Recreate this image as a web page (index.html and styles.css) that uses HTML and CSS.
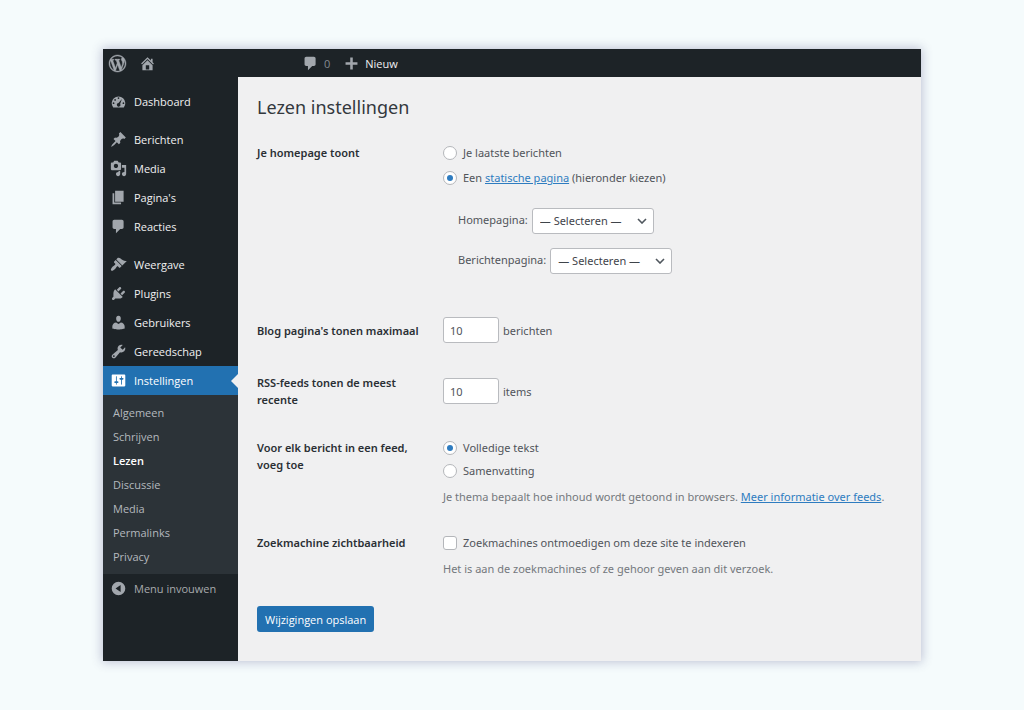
FILE: index.html
```html
<!DOCTYPE html>
<html lang="nl">
<head>
<meta charset="utf-8">
<meta name="viewport" content="width=device-width, initial-scale=1">
<title>Lezen instellingen</title>
<link rel="stylesheet" href="styles.css">
</head>
<body>
<div class="window">
  <header class="adminbar">
    <a class="bar-link" href="#" aria-label="WordPress"><svg class="icon logo" viewBox="0 0 20 20"><path d="M20 10c0-5.510-4.490-10-10-10C4.480 0 0 4.490 0 10c0 5.520 4.480 10 10 10 5.510 0 10-4.480 10-10zM7.780 15.370L4.370 6.220c.55-.02 1.170-.08 1.170-.08.5-.06.44-1.130-.06-1.110 0 0-1.450.11-2.370.11-.18 0-.37 0-.58-.01C4.120 2.690 6.870 1.110 10 1.110c2.330 0 4.450.87 6.050 2.340-.68-.11-1.650.39-1.650 1.580 0 .74.45 1.360.9 2.100.35.61.55 1.360.55 2.460 0 1.490-1.400 5-1.400 5l-3.030-8.370c.54-.02.82-.17.82-.17.5-.05.44-1.250-.06-1.220 0 0-1.440.12-2.380.12-.87 0-2.330-.12-2.330-.12-.5-.03-.56 1.200-.06 1.220l.92.08 1.260 3.410zM17.410 10c.24-.64.74-1.870.43-4.250.7 1.290 1.050 2.710 1.050 4.250 0 3.290-1.730 6.240-4.400 7.780.97-2.590 1.940-5.200 2.920-7.780zM6.100 18.090C3.120 16.650 1.110 13.530 1.110 10c0-1.300.23-2.480.72-3.590C3.250 10.300 4.670 14.200 6.100 18.090zm4.030-6.630l2.580 6.980c-.86.29-1.760.45-2.710.45-.79 0-1.570-.11-2.290-.33.81-2.380 1.620-4.740 2.420-7.100z"/></svg></a>
    <a class="bar-link site" href="#" aria-label="Site"><svg class="icon" viewBox="0 0 20 20"><path d="M16 8.500l1.530 1.530-1.060 1.060L10 4.600l-6.470 6.490-1.060-1.060L10 2.500l4 4v-2h2v4zm-6-2.460l6 5.990V18H4v-5.970zM12 17v-5H8v5h4z"/></svg></a>
    <a class="bar-link muted" href="#"><svg class="icon" viewBox="0 0 20 20"><path d="M5 2h9c1.100 0 2 .9 2 2v7c0 1.100-.9 2-2 2h-2l-5 5v-5H5c-1.100 0-2-.9-2-2V4c0-1.100.9-2 2-2z"/></svg>0</a>
    <a class="bar-link" href="#"><svg class="icon" viewBox="0 0 20 20"><path d="M17 8.500v3h-5.500V17h-3v-5.500H3v-3h5.500V3h3v5.500z"/></svg>Nieuw</a>
  </header>
  <div class="body">
    <nav class="menu">
      <ul class="menu-list">
        <li><a class="item" href="#"><svg class="icon" viewBox="0 0 20 20"><path fill-rule="evenodd" d="M3.760 17h12.480A8 8 0 1 0 3.760 17zM9 6a1 1 0 1 1 2 0 1 1 0 0 1-2 0zM5 8.200a1 1 0 1 1 2 0 1 1 0 0 1-2 0zM3.200 12a1 1 0 1 1 2 0 1 1 0 0 1-2 0zM14.800 12a1 1 0 1 1 2 0 1 1 0 0 1-2 0zM14 7.200l-2.100 5.600a2.100 2.100 0 1 1-1.900-.9z"/></svg>Dashboard</a></li>
      </ul>
      <ul class="menu-list">
        <li><a class="item" href="#"><svg class="icon" viewBox="0 0 20 20"><path d="M10.440 3.020l1.820-1.820 6.360 6.350-1.830 1.820c-1.050-.68-2.480-.57-3.410.36l-.75.75c-.92.93-1.040 2.350-.35 3.410l-1.830 1.820-2.410-2.410-2.800 2.790c-.42.42-3.380 2.710-3.800 2.290s1.860-3.390 2.280-3.810l2.790-2.790L4.100 9.360l1.830-1.820c1.050.69 2.480.57 3.400-.36l.75-.75c.93-.92 1.050-2.350.36-3.410z"/></svg>Berichten</a></li>
        <li><a class="item" href="#"><svg class="icon" viewBox="0 0 20 20"><path d="M13 11V4c0-.55-.45-1-1-1h-1.670L9 1H5L3.670 3H2c-.55 0-1 .45-1 1v7c0 .55.45 1 1 1h10c.55 0 1-.45 1-1zM7 4.500c1.380 0 2.500 1.120 2.500 2.500S8.380 9.500 7 9.500 4.500 8.380 4.500 7 5.620 4.500 7 4.500zM14 6h5v10.500c0 1.380-1.120 2.500-2.500 2.500S14 17.880 14 16.500s1.120-2.500 2.500-2.500c.17 0 .34.02.5.05V9h-3V6zm-4 8.050V13h2v3.500c0 1.380-1.120 2.500-2.500 2.500S7 17.880 7 16.500 8.120 14 9.500 14c.17 0 .34.02.5.05z"/></svg>Media</a></li>
        <li><a class="item" href="#"><svg class="icon" viewBox="0 0 20 20"><path d="M6 15V2h10v13H6zm-1 1h8v2H3V5h2v11z"/></svg>Pagina's</a></li>
        <li><a class="item" href="#"><svg class="icon" viewBox="0 0 20 20"><path d="M5 2h9c1.100 0 2 .9 2 2v7c0 1.100-.9 2-2 2h-2l-5 5v-5H5c-1.100 0-2-.9-2-2V4c0-1.100.9-2 2-2z"/></svg>Reacties</a></li>
      </ul>
      <ul class="menu-list">
        <li><a class="item" href="#"><svg class="icon" viewBox="0 0 20 20"><path d="M14.480 11.060L7.410 3.990l1.500-1.500c.5-.56 2.300-.47 3.510.32 1.210.8 1.430 1.280 2.910 2.100 1.180.64 2.450 1.260 4.450.85zm-.71.71L6.700 4.700 4.930 6.470c-.39.39-.39 1.020 0 1.410l1.060 1.060c.39.39.39 1.030 0 1.420-.6.6-1.430 1.110-2.210 1.690-.35.26-.7.53-1.010.84C1.430 14.230.4 16.080 1.400 17.070c.99 1 2.840-.03 4.180-1.360.31-.31.58-.66.85-1.020.57-.78 1.080-1.610 1.690-2.210.39-.39 1.020-.39 1.410 0l1.060 1.060c.39.39 1.020.39 1.410 0z"/></svg>Weergave</a></li>
        <li><a class="item" href="#"><svg class="icon" viewBox="0 0 20 20"><path d="M13.110 4.360L9.870 7.600 8 5.730l3.240-3.240c.35-.34 1.050-.2 1.560.32.52.51.66 1.210.31 1.550zm-8 1.770l.91-1.120 9.010 9.010-1.190.84c-.71.71-2.630 1.160-3.820 1.160H6.140L4.900 17.260c-.59.59-1.540.59-2.120 0-.59-.58-.59-1.530 0-2.120l1.240-1.240v-3.880c0-1.130.4-3.190 1.090-3.890zm7.260 3.970l3.240-3.240c.34-.35 1.040-.21 1.550.31.52.51.66 1.210.31 1.550l-3.240 3.250z"/></svg>Plugins</a></li>
        <li><a class="item" href="#"><svg class="icon" viewBox="0 0 20 20"><path d="M10 9.250c-2.270 0-2.730-3.440-2.730-3.440C7 4.020 7.820 2 9.970 2c2.160 0 2.980 2.020 2.710 3.810 0 0-.41 3.440-2.680 3.440zm0 2.570L12.720 10c2.390 0 4.520 2.330 4.520 4.530v2.490s-3.650 1.130-7.240 1.130c-3.650 0-7.240-1.130-7.240-1.130v-2.490c0-2.250 1.940-4.480 4.470-4.480z"/></svg>Gebruikers</a></li>
        <li><a class="item" href="#"><svg class="icon" viewBox="0 0 20 20"><path d="M16.680 9.770c-1.340 1.340-3.300 1.670-4.950.99l-5.410 6.520c-.99.99-2.590.99-3.580 0s-.99-2.590 0-3.570l6.520-5.420c-.68-1.650-.35-3.610.99-4.950 1.280-1.280 3.120-1.620 4.720-1.060l-2.890 2.890 2.820 2.820 2.860-2.870c.53 1.580.18 3.390-1.080 4.650zM3.810 16.210c.4.39 1.040.39 1.430 0 .4-.4.4-1.040 0-1.430-.39-.4-1.030-.4-1.430 0-.39.39-.39 1.030 0 1.430z"/></svg>Gereedschap</a></li>
        <li>
          <a class="item current" href="#"><svg class="icon" viewBox="0 0 20 20"><path d="M18 16V4c0-.55-.45-1-1-1H3c-.55 0-1 .45-1 1v12c0 .55.45 1 1 1h14c.55 0 1-.45 1-1zM8 11h1c.55 0 1 .45 1 1s-.45 1-1 1H8v1.500c0 .28-.22.5-.5.5s-.5-.22-.5-.5V13H6c-.55 0-1-.45-1-1s.45-1 1-1h1V5.500c0-.28.22-.5.5-.5s.5.22.5.5V11zm5-2h-1c-.55 0-1-.45-1-1s.45-1 1-1h1V5.500c0-.28.22-.5.5-.5s.5.22.5.5V7h1c.55 0 1 .45 1 1s-.45 1-1 1h-1v5.500c0 .28-.22.5-.5.5s-.5-.22-.5-.5V9z"/></svg>Instellingen</a>
          <ul class="submenu">
            <li><a href="#">Algemeen</a></li>
            <li><a href="#">Schrijven</a></li>
            <li><a class="active" href="#">Lezen</a></li>
            <li><a href="#">Discussie</a></li>
            <li><a href="#">Media</a></li>
            <li><a href="#">Permalinks</a></li>
            <li><a href="#">Privacy</a></li>
          </ul>
        </li>
      </ul>
      <button class="item collapse" type="button"><svg class="icon" viewBox="0 0 20 20"><path fill-rule="evenodd" d="M10 2a8 8 0 1 0 0 16 8 8 0 0 0 0-16zM12.500 5.800v8.400L6.500 10z"/></svg>Menu invouwen</button>
    </nav>
    <main class="content">
      <h1 class="title">Lezen instellingen</h1>
      <form class="form">
        <div class="row row-home" role="group" aria-labelledby="l-home">
          <div class="label" id="l-home">Je homepage toont</div>
          <div class="field">
            <label class="choice"><input type="radio" name="front">Je laatste berichten</label>
            <div class="choice static"><input type="radio" name="front" id="static" checked><label for="static">Een <a href="#">statische pagina</a> (hieronder kiezen)</label></div>
            <div class="pick first"><label for="home">Homepagina:</label><select class="select" id="home"><option>— Selecteren —</option></select></div>
            <div class="pick"><label for="posts">Berichtenpagina:</label><select class="select" id="posts"><option>— Selecteren —</option></select></div>
          </div>
        </div>
        <div class="row middle">
          <label class="label" for="max">Blog pagina's tonen maximaal</label>
          <div class="amount"><input class="number" id="max" type="text" inputmode="numeric" value="10">berichten</div>
        </div>
        <div class="row middle">
          <label class="label" for="rss">RSS-feeds tonen de meest recente</label>
          <div class="amount"><input class="number" id="rss" type="text" inputmode="numeric" value="10">items</div>
        </div>
        <div class="row" role="group" aria-labelledby="l-feed">
          <div class="label" id="l-feed">Voor elk bericht in een feed, voeg toe</div>
          <div class="field">
            <label class="choice"><input type="radio" name="feed" checked>Volledige tekst</label>
            <label class="choice next"><input type="radio" name="feed">Samenvatting</label>
            <p class="note">Je thema bepaalt hoe inhoud wordt getoond in browsers. <a href="#">Meer informatie over feeds</a>.</p>
          </div>
        </div>
        <div class="row" role="group" aria-labelledby="l-search">
          <div class="label" id="l-search">Zoekmachine zichtbaarheid</div>
          <div class="field">
            <label class="choice"><input type="checkbox">Zoekmachines ontmoedigen om deze site te indexeren</label>
            <p class="note">Het is aan de zoekmachines of ze gehoor geven aan dit verzoek.</p>
          </div>
        </div>
        <button class="save" type="button">Wijzigingen opslaan</button>
      </form>
    </main>
  </div>
</div>
</body>
</html>
```
FILE: styles.css
```css
* { box-sizing: border-box; }

body {
  margin: 0;
  min-height: 100vh;
  padding: 49px 103px;
  background: #f5fbfc;
  color: #50545a;
  font: 11px/17px "Open Sans", "Noto Sans", sans-serif;
}

button, input, select { font: inherit; }
ul { list-style: none; margin: 0; padding: 0; }
a { color: #2e7cc0; }

.window {
  display: flex;
  flex-direction: column;
  min-height: calc(100vh - 98px);
  background: #f0f0f1;
  box-shadow: 0 0 10px 1px rgba(60, 60, 120, 0.3);
}

.adminbar {
  display: flex;
  align-items: center;
  gap: 13px;
  height: 28px;
  padding: 0 6px;
  background: #1d2327;
}

.bar-link {
  display: flex;
  align-items: center;
  gap: 5px;
  color: #f0f0f1;
  text-decoration: none;
}

.bar-link.site { margin-right: 133px; }
.bar-link.muted { color: #858a90; }

.icon {
  flex: none;
  width: 17px;
  height: 17px;
  fill: #a2a7ad;
}

.logo { stroke: #a2a7ad; stroke-width: 0.5; overflow: visible; }

.body { display: flex; flex: 1; }

.menu {
  flex: none;
  width: 135px;
  padding-top: 10px;
  background: #1d2327;
}

.menu-list + .menu-list { margin-top: 9px; }

.item {
  position: relative;
  display: flex;
  align-items: center;
  gap: 7px;
  height: 29px;
  padding: 0 7px;
  color: #f0f0f1;
  text-decoration: none;
}

.current { background: #2271b1; color: #fff; }
.current .icon { fill: #fff; }

.current::after {
  content: "";
  position: absolute;
  top: 8px;
  right: 0;
  border: 7px solid transparent;
  border-left: 0;
  border-right-color: #f0f0f1;
}

.submenu { padding: 6px 0 5px; background: #2c3338; }

.submenu a {
  display: block;
  padding: 0 10px;
  color: #b4b9be;
  line-height: 24px;
  text-decoration: none;
}

.submenu .active { color: #fff; font-weight: 600; }

.collapse {
  width: 100%;
  border: 0;
  background: none;
  color: #a7aaad;
}

.content {
  flex: 1;
  padding: 18px 19px 28px;
  font-family: "Noto Sans", "Open Sans", sans-serif;
}

.title {
  margin: 0;
  color: #33383d;
  font-size: 18px;
  font-weight: 400;
  line-height: 24px;
}

.form { padding-top: 25px; }

.row {
  display: grid;
  grid-template-columns: 164px 1fr;
  column-gap: 22px;
  margin-bottom: 29px;
}

.row-home { margin-bottom: 43px; }
.middle { align-items: center; margin-bottom: 31px; }

.label { color: #2a2f34; font-weight: 600; }

.choice { display: flex; align-items: center; gap: 6px; }
.static { margin-top: 8px; }
.next { margin-top: 6px; }

.choice input {
  appearance: none;
  display: grid;
  place-items: center;
  width: 14px;
  height: 14px;
  margin: 0;
  border: 1px solid #b4b6ba;
  border-radius: 3px;
  background: #fff;
}

.choice input[type="radio"] { border-radius: 50%; }

.choice input[type="radio"]:checked::before {
  content: "";
  width: 6px;
  height: 6px;
  border-radius: 50%;
  background: #2e7cc0;
}

.pick {
  display: flex;
  gap: 4px;
  margin: 14px 0 0 15px;
  line-height: 24px;
}

.pick.first { margin-top: 22px; }

.select {
  appearance: none;
  width: 122px;
  height: 26px;
  padding: 0 7px;
  border: 1px solid #b9bbbf;
  border-radius: 3px;
  color: #3f444a;
  background: #fff url("data:image/svg+xml,%3Csvg xmlns='http://www.w3.org/2000/svg' viewBox='0 0 10 6'%3E%3Cpath d='M1 1l4 4 4-4' fill='none' stroke='%2350575e' stroke-width='1.600'/%3E%3C/svg%3E") no-repeat right 6px center / 10px 6px;
}

.amount { display: flex; align-items: center; gap: 4px; }

.number {
  width: 56px;
  height: 26px;
  padding: 0 6px;
  border: 1px solid #b9bbbf;
  border-radius: 3px;
  background: #fff;
  color: #50545a;
}

.note { margin: 9px 0 0; color: #74787d; }

.save {
  height: 26px;
  padding: 0 8px;
  border: 0;
  border-radius: 3px;
  background: #2271b1;
  color: #fff;
  font-family: "Open Sans", "Noto Sans", sans-serif;
}
```
